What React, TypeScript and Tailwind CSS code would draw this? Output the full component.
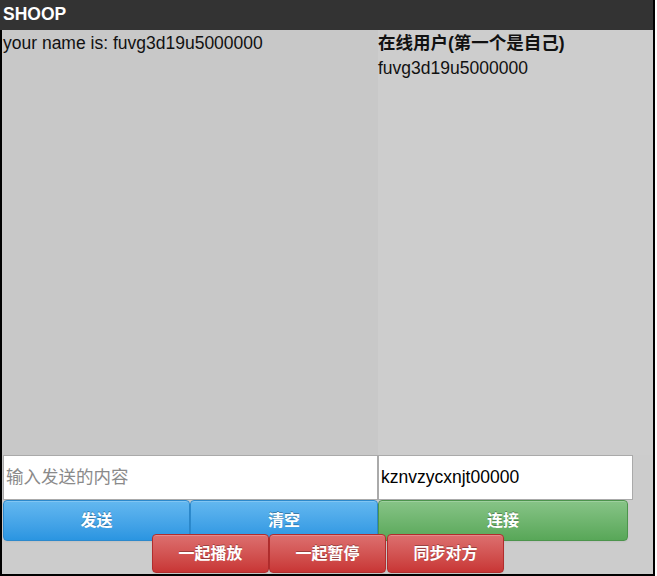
import React from "react";

const btnBase =
  "flex items-center justify-center rounded-[4px] font-bold text-white text-[16px] [text-shadow:0_-1px_0_rgba(0,0,0,0.3)] shadow-[inset_0_1px_0_rgba(255,255,255,0.2),0_1px_2px_rgba(0,0,0,0.05)]";

export default function App() {
  return (
    <div className="w-[657px] h-[576px] bg-white font-['Liberation_Sans','Noto_Sans_CJK_SC',sans-serif] text-[#111]">
      <div className="w-[655px] h-[576px] flex flex-col">
        <header className="h-[30px] shrink-0 bg-[#333333] border-r-2 border-black text-white font-bold text-[17.5px] leading-[20px] pl-[3px] pt-[4px]">
          SHOOP
        </header>
        <div className="flex-1 min-h-0 flex flex-col bg-[#cccccc] border-l-2 border-r-2 border-b-2 border-black">
          <div className="flex flex-1 min-h-0">
            <div className="w-[376px] bg-[#c8c8c8] pl-[1px] pt-[3px] text-[17.5px] leading-[20px]">
              your name is: fuvg3d19u5000000
            </div>
            <div className="flex-1 bg-[#cdcdcd] pt-[3px] text-[17.5px] leading-[20px]">
              <div className="font-bold">在线用户(第一个是自己)</div>
              <div className="mt-[5px]">fuvg3d19u5000000</div>
            </div>
          </div>
          <div className="flex h-[45px] shrink-0">
            <div className="w-[376px] pl-[1px] bg-[#c8c8c8]">
              <div className="w-[375px] h-[45px] bg-white border border-[#aaaaaa] flex items-center pl-[2px] text-[17.5px] text-[#8a8a8a]">
                输入发送的内容
              </div>
            </div>
            <div className="w-[255px] h-[45px] bg-white border border-[#aaaaaa] flex items-center pl-[2px] text-[17.5px] text-black">
              kznvzycxnjt00000
            </div>
          </div>
          <div className="flex h-[41px] shrink-0 pl-[1px]">
            <div
              className={`${btnBase} w-[187px] h-[41px] bg-gradient-to-b from-[#63b8f0] to-[#2a95e1] border border-[#2c89cc]`}
            >
              发送
            </div>
            <div
              className={`${btnBase} w-[188px] h-[41px] bg-gradient-to-b from-[#63b8f0] to-[#2a95e1] border border-[#2c89cc]`}
            >
              清空
            </div>
            <div
              className={`${btnBase} w-[250px] h-[41px] bg-gradient-to-b from-[#87c487] to-[#58a758] border border-[#4c944c]`}
            >
              连接
            </div>
          </div>
          <div className="flex justify-center h-[40px] -mt-[7px] shrink-0 relative pl-[1px]">
            <div
              className={`${btnBase} w-[117px] h-[39px] bg-gradient-to-b from-[#dc6f6f] to-[#c83535] border border-[#b12d2d]`}
            >
              一起播放
            </div>
            <div
              className={`${btnBase} w-[117px] h-[39px] bg-gradient-to-b from-[#dc6f6f] to-[#c83535] border border-[#b12d2d]`}
            >
              一起暂停
            </div>
            <div
              className={`${btnBase} w-[117px] h-[39px] ml-[1px] bg-gradient-to-b from-[#dc6f6f] to-[#c83535] border border-[#b12d2d]`}
            >
              同步对方
            </div>
          </div>
        </div>
      </div>
    </div>
  );
}
